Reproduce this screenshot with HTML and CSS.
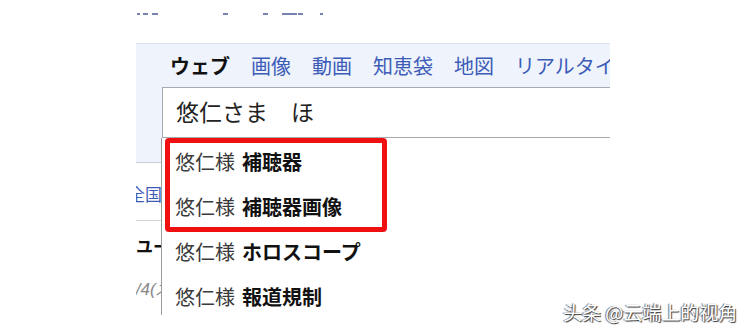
FILE: index.html
```html
<!DOCTYPE html>
<html lang="ja">
<head>
    <meta charset="UTF-8">
    <title>検索 - 悠仁さま ほ</title>
    <link rel="stylesheet" href="styles.css">
</head>
<body>

    <!-- remnants of the cropped heading -->
    <div class="crop-edge">
        <i class="bit" style="width: 3px"></i>
        <i class="bit" style="width: 5px; margin-left: 3px"></i>
        <i class="bit" style="width: 6px; margin-left: 4px"></i>
        <i class="bit" style="width: 5px; margin-left: 65px"></i>
        <i class="bit" style="width: 5px; margin-left: 35px"></i>
        <i class="bit" style="width: 15px; margin-left: 14px"></i>
        <i class="bit" style="width: 5px; margin-left: 1px"></i>
        <i class="bit" style="width: 3px; margin-left: 17px"></i>
    </div>

    <div class="page">
        <div class="search-panel">
            <nav class="tabs">
                <span class="tab active">ウェブ</span>
                <a class="tab" href="#">画像</a>
                <a class="tab" href="#">動画</a>
                <a class="tab" href="#">知恵袋</a>
                <a class="tab" href="#">地図</a>
                <a class="tab" href="#">リアルタイム</a>
            </nav>
            <div class="search-box">悠仁さま　ほ</div>
        </div>

        <div class="results">
            <p class="result-link">全国のニュース一覧</p>
            <p class="result-title">ユーザーの声</p>
            <p class="result-date">2019/4(木) 12:30</p>
        </div>

        <ul class="suggest">
            <li><span class="q">悠仁様</span><b>補聴器</b></li>
            <li><span class="q">悠仁様</span><b>補聴器画像</b></li>
            <li><span class="q">悠仁様</span><b>ホロスコープ</b></li>
            <li><span class="q">悠仁様</span><b>報道規制</b></li>
        </ul>

        <div class="mark"></div>
    </div>

    <div class="watermark">头条 @云端上的视角</div>

</body>
</html>
```

FILE: styles.css
```css
* {
    margin: 0;
    padding: 0;
    box-sizing: border-box;
}

body {
    font-family: "Noto Sans CJK JP", "Noto Sans", sans-serif;
    background: #ffffff;
    color: #111111;
    width: 745px;
    height: 335px;
    overflow: hidden;
    position: relative;
}

.crop-edge {
    display: flex;
    align-items: flex-start;
    height: 16px;
    padding-top: 13px;
    padding-left: 137px;
}

.bit {
    display: block;
    height: 2px;
    background: #4a5894;
    opacity: 0.75;
}

.page {
    position: relative;
    margin-left: 136px;
    width: 474px;
    height: 319px;
    overflow: hidden;
}

.search-panel {
    margin-top: 27px;
    background: #eef3fc;
    border-top: 1px solid #d9dfe9;
    border-bottom: 1px solid #c8ccd3;
    height: 120px;
}

.tabs {
    display: flex;
    gap: 21px;
    padding-left: 34px;
    height: 43px;
    align-items: center;
    font-size: 20px;
    white-space: nowrap;
}

.tab {
    color: #3d5cb8;
    text-decoration: none;
}

.tab.active {
    color: #111111;
    font-weight: bold;
}

.search-box {
    margin-left: 26px;
    height: 51px;
    width: 460px;
    background: #ffffff;
    border: 1px solid #a6a9ad;
    padding-left: 13px;
    font-size: 23px;
    line-height: 47px;
    color: #222222;
    white-space: nowrap;
}

.results {
    padding-top: 16px;
    font-size: 17px;
    white-space: nowrap;
}

.result-link {
    color: #3d5cb8;
    height: 42px;
    line-height: 30px;
    margin-left: -8px;
    border-bottom: 1px solid #d0d3d8;
}

.result-title {
    font-weight: bold;
    margin-top: 13px;
    line-height: 24px;
}

.result-date {
    font-family: "Liberation Sans", sans-serif;
    font-style: italic;
    color: #888888;
    margin-top: 20px;
    margin-left: -38px;
    line-height: 24px;
}

.suggest {
    position: absolute;
    left: 25px;
    top: 122px;
    width: 460px;
    height: 177px;
    background: #ffffff;
    border-left: 1px solid #9a9a9a;
    list-style: none;
    padding-top: 1px;
}

.suggest li {
    display: flex;
    align-items: center;
    gap: 7px;
    height: 45px;
    padding-left: 13px;
    font-size: 20px;
    white-space: nowrap;
}

.suggest .q {
    color: #3a3a3a;
}

.suggest b {
    color: #111111;
}

.mark {
    position: absolute;
    left: 29px;
    top: 122px;
    width: 222px;
    height: 94px;
    border: 5px solid #f01010;
    border-radius: 4px;
}

.watermark {
    position: absolute;
    left: 563px;
    top: 301px;
    font-family: "Noto Sans CJK SC", sans-serif;
    font-size: 19px;
    line-height: 22px;
    color: #ffffff;
    text-shadow: 1px 1px 1px #333333, -1px 0 1px #666666;
    white-space: nowrap;
}
```
